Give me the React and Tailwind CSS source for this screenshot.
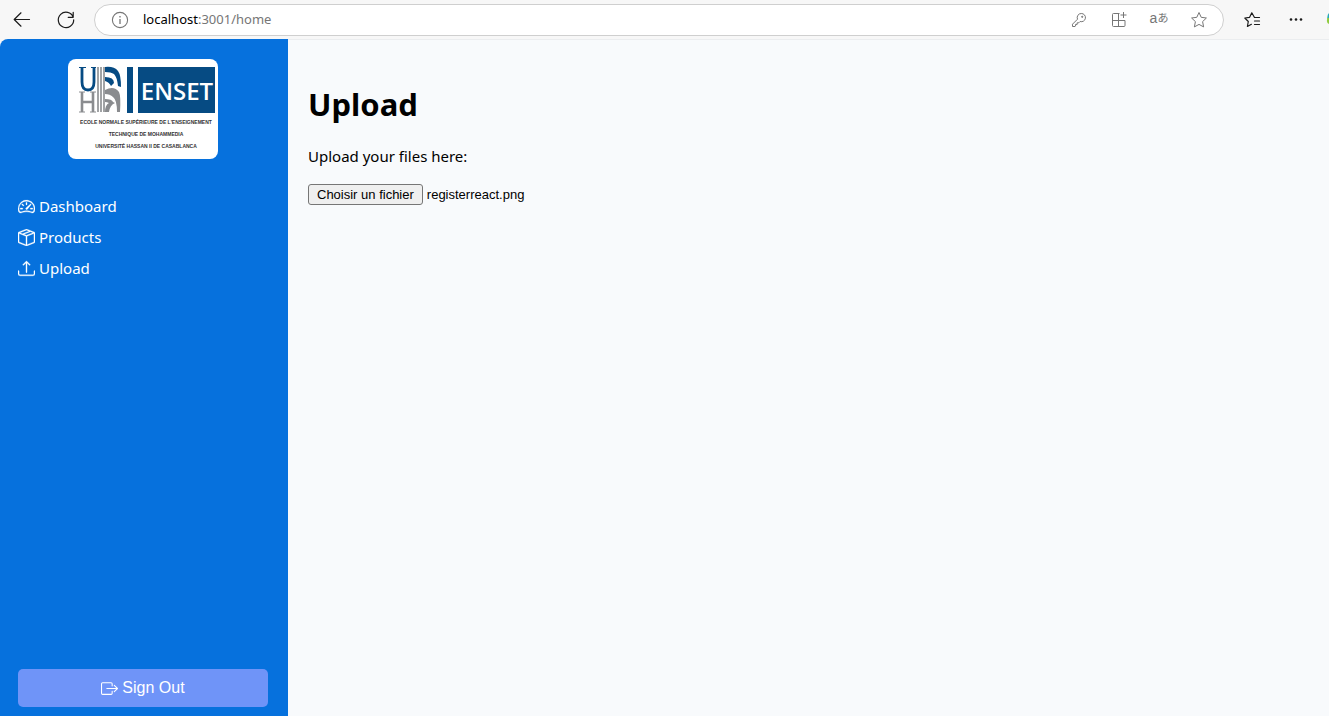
import { useRef, useState } from "react";
import { BsSpeedometer2, BsBoxSeam, BsUpload, BsBoxArrowRight } from "react-icons/bs";

function BrowserBar() {
  return (
    <header className="flex h-[39px] shrink-0 items-center bg-[#f7f7f7] text-[#1b1b1b]">
      <button aria-label="Back" className="ml-3 flex size-5 items-center justify-center">
        <svg width="20" height="20" viewBox="0 0 20 20" fill="none" stroke="currentColor" strokeWidth="1.2" strokeLinecap="round" strokeLinejoin="round">
          <path d="M17.5 9.5H2.5M9 2.8 2.2 9.5 9 16.2" />
        </svg>
      </button>
      <button aria-label="Refresh" className="ml-6 flex size-5 items-center justify-center">
        <svg width="20" height="20" viewBox="0 0 20 20" fill="none" stroke="currentColor" strokeWidth="1.2" strokeLinecap="round" strokeLinejoin="round">
          <path d="M17.2 7.2A7.7 7.7 0 1 0 17.7 9.8M17.2 2.3v5h-5" />
        </svg>
      </button>
      <div className="ml-[18px] flex h-8 flex-1 items-center rounded-full border border-[#cfcfcf] bg-white pr-4 pl-4 text-[#767676]">
        <svg width="18" height="18" viewBox="0 0 18 18" fill="none" stroke="currentColor" strokeWidth="1.1">
          <circle cx="9" cy="9" r="7.6" />
          <path d="M9 8v5M9 5v1.4" strokeWidth="1.3" />
        </svg>
        <span className="ml-[14px] flex-1 font-['Noto_Sans','Open_Sans',sans-serif] text-[13px]">
          <span className="text-black">localhost</span>:3001/home
        </span>
        <span className="flex items-center gap-6">
          <button aria-label="Saved passwords" className="size-4">
            <svg width="16" height="16" viewBox="0 0 16 16" fill="none" stroke="currentColor" strokeWidth="1" strokeLinejoin="round">
              <path d="M10.3 1.5a4.1 4.1 0 1 1-1.2 8L7.8 10.8H6.2v1.6H4.6V14L4 14.5H1.5v-2.3l5-5a4.1 4.1 0 0 1 3.8-5.7Z" />
              <circle cx="11.2" cy="4.8" r=".6" fill="currentColor" />
            </svg>
          </button>
          <button aria-label="Apps" className="size-4">
            <svg width="16" height="16" viewBox="0 0 16 16" fill="none" stroke="currentColor" strokeWidth="1">
              <path d="M8.5 1.5h-6a1 1 0 0 0-1 1v11a1 1 0 0 0 1 1h10.5a1 1 0 0 0 1-1v-5H1.5M7.5 1.5v13M12.5 0v6M9.5 3h6" />
            </svg>
          </button>
          <button aria-label="Translate" className="flex h-4 w-4 items-center justify-center pb-1 font-['Liberation_Sans','Noto_Sans_CJK_JP',sans-serif] text-[14px] leading-4 whitespace-nowrap">
            a<span className="text-[11px]">あ</span>
          </button>
          <button aria-label="Add to favourites" className="size-4">
            <svg width="16" height="16" viewBox="0 0 16 16" fill="none" stroke="currentColor" strokeWidth="1" strokeLinejoin="round">
              <path d="m8 .5 2.2 4.8 5.2.7-3.8 3.6 1 5.3L8 12.4l-4.6 2.5 1-5.3L.6 6l5.2-.7Z" />
            </svg>
          </button>
        </span>
      </div>
      <button aria-label="Favourites" className="ml-5 size-4">
        <svg width="18" height="16" viewBox="0 0 18 16" fill="none" stroke="currentColor" strokeWidth="1.2" strokeLinejoin="round" strokeLinecap="round">
          <path d="M15.5 5.5h-5L7.8 .8 5.6 5.3.8 6l3.5 3.5-.9 5 4-2.2M10.5 9h5M10.5 12.5h5" />
        </svg>
      </button>
      <button aria-label="More" className="ml-7 size-4">
        <svg width="16" height="16" viewBox="0 0 16 16" fill="currentColor">
          <circle cx="3" cy="7.5" r="1.3" />
          <circle cx="8" cy="7.5" r="1.3" />
          <circle cx="13" cy="7.5" r="1.3" />
        </svg>
      </button>
      <svg className="ml-[22px]" width="3" height="16" viewBox="0 0 3 16">
        <path d="M3 1Q1.5 2 1.2 6L3 8Z" fill="#27a9b8" />
        <path d="M1.2 6Q.5 9 1.5 11l1.5 1V6Z" fill="#8fcb3d" />
      </svg>
    </header>
  );
}

function Logo() {
  return (
    <svg className="mx-auto rounded-lg" width="150" height="100" viewBox="0 0 150 100" role="img" aria-label="ENSET">
      <rect width="150" height="100" fill="#fff" />
      <g fill="none" stroke="#8a8c8f">
        <path d="M14 33v20M25 33v20M14 43h11" strokeWidth="2.6" />
        <path d="M11 33h6M22 33h6M11 53h6M22 53h6" strokeWidth="1" />
        <path d="M30 8v45M33 8v45M36 8v45" strokeWidth="1.6" />
      </g>
      <path d="M37 31q9-5 14 2 2 4 1 20h-3q0-12-4-15-3-3-8-3ZM37 40q7 0 8 3l2 1q-5 2-6 9h-4q0-7 4-9-2-1-4-1Z" fill="#8a8c8f" />
      <path d="M14 9v14q0 8 6 8 6 0 6-8V9" fill="none" stroke="#064b83" strokeWidth="2.8" />
      <path d="M11 8.5h7M23 8.5h5" stroke="#064b83" />
      <path d="M37 8q9-1 13 4 3 4 3 16l-3-1q-1-9-4-12-3-2-9-2ZM37 18q9 0 9 6l-3 3q-2-4-6-5Z" fill="#064b83" />
      <path d="M59 8h6v46h-6zM70 8h77v46H70z" fill="#064b83" />
      <text x="109" y="41" textAnchor="middle" fill="#fff" className="font-['Open_Sans','Noto_Sans',sans-serif] text-[24px] font-semibold">ENSET</text>
      <g textAnchor="middle" fill="#333" className="font-['Liberation_Sans',Arial,sans-serif] text-[5px] font-bold">
        <text x="78" y="65">ECOLE NORMALE SUPÉRIEURE DE L'ENSEIGNEMENT</text>
        <text x="78" y="77">TECHNIQUE DE MOHAMMEDIA</text>
        <text x="78" y="89">UNIVERSITÉ HASSAN II DE CASABLANCA</text>
      </g>
    </svg>
  );
}

const links = [
  { label: "Dashboard", Icon: BsSpeedometer2 },
  { label: "Products", Icon: BsBoxSeam },
  { label: "Upload", Icon: BsUpload },
];

function Sidebar() {
  return (
    <aside className="flex w-72 shrink-0 flex-col rounded-tl-lg bg-[#0671dd] pt-5 pr-5 pb-[9px] pl-[18px] text-white">
      <Logo />
      <nav className="mt-8 flex flex-col">
        {links.map(({ label, Icon }) => (
          <a key={label} href={"#" + label.toLowerCase()} className="flex h-[31px] items-center gap-1">
            <Icon size={17} className="stroke-current [stroke-width:0.3]" />
            {label}
          </a>
        ))}
      </nav>
      <button className="mt-auto flex h-[38px] items-center justify-center gap-1 rounded-[5px] bg-[#6f94f8] font-['Liberation_Sans',Arial,sans-serif] text-base">
        <BsBoxArrowRight size={17} />
        Sign Out
      </button>
    </aside>
  );
}

function Upload() {
  const input = useRef(null);
  const [fileName, setFileName] = useState("registerreact.png");
  return (
    <main className="flex-1 border-t border-[#ebedef] bg-[#f8fafc] px-5 pt-10">
      <h1 className="text-[31px] leading-12 font-bold">Upload</h1>
      <label htmlFor="file" className="mt-4 block leading-6">Upload your files here:</label>
      <div className="mt-4 flex items-center gap-1 font-['Liberation_Sans',Arial,sans-serif] text-[13px]">
        <input
          ref={input}
          id="file"
          type="file"
          className="hidden"
          onChange={(e) => setFileName(e.target.files[0]?.name ?? "")}
        />
        <button
          onClick={() => input.current.click()}
          className="h-[21px] rounded-[3px] border border-[#767676] bg-[#efefef] px-2 leading-4"
        >
          Choisir un fichier
        </button>
        <span>{fileName}</span>
      </div>
    </main>
  );
}

export default function App() {
  return (
    <div className="flex min-h-screen flex-col bg-[#f7f7f7] font-['Noto_Sans','Open_Sans',sans-serif] text-[15px] text-black">
      <BrowserBar />
      <div className="flex flex-1">
        <Sidebar />
        <Upload />
      </div>
    </div>
  );
}
